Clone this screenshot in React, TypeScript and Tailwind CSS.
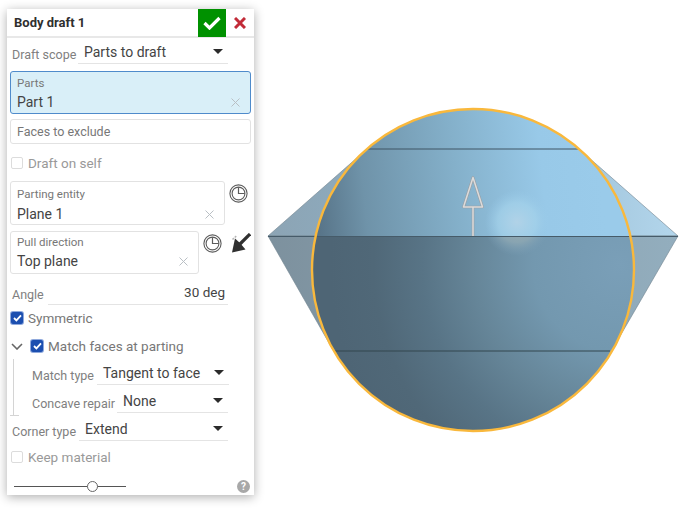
import { ReactNode } from 'react';

const Caret = () => (
  <svg width="10" height="5" viewBox="0 0 10 5" className="shrink-0">
    <path d="M0 0h10L5 5z" fill="#2b2b2b" />
  </svg>
);

const Clear = () => (
  <svg width="9" height="9" viewBox="0 0 9 9" className="shrink-0">
    <path d="M.5.5l8 8M8.5.5l-8 8" stroke="#b9bfc4" strokeWidth="1" />
  </svg>
);

const Clock = () => (
  <svg width="19" height="19" viewBox="0 0 19 19" className="shrink-0">
    <circle cx="9.5" cy="9.5" r="8.6" fill="none" stroke="#5c5c5c" strokeWidth="1.1" />
    <circle cx="9.5" cy="9.5" r="6.4" fill="none" stroke="#5c5c5c" strokeWidth="1.1" />
    <path d="M9.5 3.2v6.3h6.2" fill="none" stroke="#5c5c5c" strokeWidth="1.2" />
  </svg>
);

const Check = ({ on, label }: { on?: boolean; label: string }) => (
  <div className="flex h-[16px] items-center gap-[5px]">
    {on ? (
      <span className="flex h-[12px] w-[12px] shrink-0 items-center justify-center rounded-[2px] bg-[#1c4fb0] shadow-[0_0_0_1px_#8fa9dc]">
        <svg width="9" height="8" viewBox="0 0 9 8">
          <path d="M1 4l2.4 2.4L8 1.4" fill="none" stroke="#fff" strokeWidth="1.8" />
        </svg>
      </span>
    ) : (
      <span className="h-[12px] w-[12px] shrink-0 rounded-[2px] border border-[#dcdcdc] bg-white" />
    )}
    <span className={`whitespace-nowrap text-[13.5px] leading-[16px] ${on ? 'text-[#777]' : 'text-[#999]'}`}>{label}</span>
  </div>
);

const Select = ({ label, value, labelClass, fieldClass }: { label: string; value: string; labelClass: string; fieldClass: string }) => (
  <div className="flex h-[22px] shrink-0 items-end">
    <span className={`shrink-0 whitespace-nowrap pb-[1px] text-[12.5px] leading-[16px] text-[#808080] ${labelClass}`}>{label}</span>
    <div className={`flex h-[22px] items-center justify-between border-b border-[#e4e4e4] pb-[2px] pl-[6px] pr-[5px] ${fieldClass}`}>
      <span className="whitespace-nowrap text-[14px] leading-[18px] text-[#444]">{value}</span>
      <Caret />
    </div>
  </div>
);

const Field = ({ label, value, className, labelClass, rowClass, children }: { label: string; value: string; className: string; labelClass: string; rowClass: string; children?: ReactNode }) => (
  <div className={`flex shrink-0 flex-col rounded-[3px] border px-[6px] ${className}`}>
    <span className={`text-[11.5px] leading-[14px] text-[#777] ${labelClass}`}>{label}</span>
    <div className={`flex items-center justify-between pr-[4px] ${rowClass}`}>
      <span className="text-[14px] leading-[19px] text-[#444]">{value}</span>
      {children}
    </div>
  </div>
);

const Panel = () => (
  <div className="ml-[7px] mt-[9px] flex h-[486px] w-[247px] shrink-0 flex-col bg-white shadow-[0_2px_10px_rgba(0,0,0,0.32)]">
    <div className="flex h-[29px] shrink-0 items-center border-b-2 border-[#e8e8e8]">
      <span className="ml-[7px] flex-1 text-[13px] font-bold text-[#2f2f2f]">Body draft 1</span>
      <div className="flex h-[28px] w-[28px] items-center justify-center self-start bg-[#009100]">
        <svg width="18" height="14" viewBox="0 0 18 14">
          <path d="M1.5 7l5 5L16.5 2" fill="none" stroke="#fff" strokeWidth="3.2" />
        </svg>
      </div>
      <div className="flex w-[28px] items-center justify-center">
        <svg width="12" height="12" viewBox="0 0 12 12">
          <path d="M1 1l10 10M11 1L1 11" stroke="#c22b38" strokeWidth="3" />
        </svg>
      </div>
    </div>

    <div className="ml-[5px] mt-[4px]">
      <Select label="Draft scope" value="Parts to draft" labelClass="w-[66px]" fieldClass="w-[150px]" />
    </div>

    <Field label="Parts" value="Part 1" className="ml-[3px] mt-[7px] h-[43px] w-[241px] border-[#4f8bcb] bg-[#d9eff8]" labelClass="mt-[4px]" rowClass="mt-[3px]">
      <Clear />
    </Field>

    <div className="ml-[3px] mt-[5px] flex h-[25px] w-[241px] shrink-0 items-center rounded-[3px] border border-[#e2e2e2] px-[6px] pt-[2px] text-[12.5px] text-[#777]">
      Faces to exclude
    </div>

    <div className="ml-[4px] mt-[11px]">
      <Check label="Draft on self" />
    </div>

    <div className="ml-[3px] mt-[10px] flex w-[241px] shrink-0 items-start justify-between">
      <Field label="Parting entity" value="Plane 1" className="h-[44px] w-[215px] border-[#e2e2e2]" labelClass="mt-[5px]" rowClass="mt-[4px]">
        <Clear />
      </Field>
      <span className="mr-[3px] mt-[3px]">
        <Clock />
      </span>
    </div>

    <div className="ml-[3px] mt-[6px] flex w-[241px] shrink-0 items-start">
      <Field label="Pull direction" value="Top plane" className="h-[43px] w-[189px] border-[#e2e2e2]" labelClass="mt-[3px]" rowClass="mt-[3px]">
        <Clear />
      </Field>
      <span className="ml-[4px] mt-[3px]">
        <Clock />
      </span>
      <svg width="20" height="20" viewBox="0 0 20 20" className="ml-[9px] mt-[2px]">
        <path d="M1.5 6.5L6 2.5" stroke="#b5b5b5" strokeWidth="1.6" strokeDasharray="2 1" />
        <path d="M1 19.5L4 5.5L9 10L14.5 16.5z" fill="#303030" />
        <path d="M19 1L8.5 11.5" stroke="#303030" strokeWidth="3.2" />
      </svg>
    </div>

    <div className="ml-[5px] mt-[9px] flex h-[22px] shrink-0 items-end">
      <span className="w-[36px] pb-[1px] text-[12.5px] leading-[18px] text-[#808080]">Angle</span>
      <div className="flex h-[22px] w-[180px] items-center justify-end border-b border-[#e4e4e4] pb-[2px] pr-[3px] text-[13.5px] text-[#444]">
        30 deg
      </div>
    </div>

    <div className="ml-[4px] mt-[5px]">
      <Check on label="Symmetric" />
    </div>

    <div className="ml-[4px] mt-[12px] flex h-[16px] items-center gap-[8px]">
      <svg width="12" height="7" viewBox="0 0 12 7" className="shrink-0">
        <path d="M1 1l5 5 5-5" fill="none" stroke="#666" strokeWidth="1.6" />
      </svg>
      <Check on label="Match faces at parting" />
    </div>

    <div className="relative ml-[6px] mt-[5px] flex h-[57px] shrink-0 flex-col border-l border-[#d4d4d4] pl-[18px] pt-[4px]">
      <span className="absolute -left-[4px] bottom-0 h-px w-[9px] bg-[#d4d4d4]" />
      <Select label="Match type" value="Tangent to face" labelClass="w-[65px]" fieldClass="w-[132px]" />
      <div className="mt-[6px]">
        <Select label="Concave repair" value="None" labelClass="w-[85px]" fieldClass="w-[111px]" />
      </div>
    </div>

    <div className="ml-[5px] mt-[3px]">
      <Select label="Corner type" value="Extend" labelClass="w-[67px]" fieldClass="w-[149px]" />
    </div>

    <div className="ml-[4px] mt-[8px]">
      <Check label="Keep material" />
    </div>

    <div className="ml-[7px] mt-[15px] flex items-center justify-between pr-[4px]">
      <div className="relative h-[11px] w-[112px]">
        <div className="absolute left-0 right-0 top-[5px] h-px bg-[#555]" />
        <div className="absolute left-[73px] top-0 h-[11px] w-[11px] rounded-full border border-[#666] bg-white" />
      </div>
      <span className="flex h-[13px] w-[13px] items-center justify-center rounded-full bg-[#a8a8a8] text-[10px] font-bold leading-none text-white">
        ?
      </span>
    </div>
  </div>
);

// 3D view, viewBox is in page coordinates
const Viewport = () => (
  <svg width="430" height="340" viewBox="254 100 430 340" className="mt-[100px] shrink-0">
    <defs>
      <linearGradient id="coneTop" x1="0" y1="0" x2="1" y2="0">
        <stop offset="0" stopColor="#8ca4b4" />
        <stop offset="0.5" stopColor="#8fb3ca" />
        <stop offset="1" stopColor="#b3d6ec" />
      </linearGradient>
      <linearGradient id="coneBot" x1="0" y1="0" x2="1" y2="0">
        <stop offset="0" stopColor="#7d919e" />
        <stop offset="1" stopColor="#93aebe" />
      </linearGradient>
      <linearGradient id="upper" gradientUnits="userSpaceOnUse" x1="312" y1="200" x2="600" y2="170">
        <stop offset="0" stopColor="#567286" />
        <stop offset="0.18" stopColor="#6f93a9" />
        <stop offset="0.5" stopColor="#84b0ca" />
        <stop offset="0.8" stopColor="#98c9e8" />
        <stop offset="1" stopColor="#9acbea" />
      </linearGradient>
      <radialGradient id="lower" gradientUnits="userSpaceOnUse" cx="620" cy="265" r="290">
        <stop offset="0" stopColor="#7a9fb8" />
        <stop offset="0.3" stopColor="#7398af" />
        <stop offset="0.5" stopColor="#668699" />
        <stop offset="0.68" stopColor="#587486" />
        <stop offset="0.85" stopColor="#506878" />
        <stop offset="1" stopColor="#4e6575" />
      </radialGradient>
      <radialGradient id="spotTop" gradientUnits="userSpaceOnUse" cx="517" cy="222" r="32">
        <stop offset="0" stopColor="#b1d2e7" />
        <stop offset="0.6" stopColor="#a6d4ec" stopOpacity="0.65" />
        <stop offset="1" stopColor="#9acbea" stopOpacity="0" />
      </radialGradient>
      <radialGradient id="spotBot" gradientUnits="userSpaceOnUse" cx="517" cy="222" r="34">
        <stop offset="0" stopColor="#a3aeb0" />
        <stop offset="0.6" stopColor="#8fa9b4" stopOpacity="0.8" />
        <stop offset="1" stopColor="#7a9fb8" stopOpacity="0" />
      </radialGradient>
      <clipPath id="above">
        <rect x="254" y="100" width="430" height="136" />
      </clipPath>
      <clipPath id="below">
        <rect x="254" y="236" width="430" height="204" />
      </clipPath>
    </defs>

    <path d="M268 236L367 149H579L678 236z" fill="url(#coneTop)" stroke="#71838f" strokeWidth="0.6" />
    <path d="M268 236L333 350H612L678 236z" fill="url(#coneBot)" stroke="#71838f" strokeWidth="0.6" />

    <circle cx="473" cy="270" r="161" fill="url(#upper)" clipPath="url(#above)" />
    <circle cx="473" cy="270" r="161" fill="url(#lower)" clipPath="url(#below)" />
    <circle cx="517" cy="222" r="32" fill="url(#spotTop)" clipPath="url(#above)" />
    <circle cx="517" cy="222" r="34" fill="url(#spotBot)" clipPath="url(#below)" />

    <path d="M368 149H578" stroke="#3f5564" strokeWidth="1" />
    <path d="M268 236.5H678" stroke="#465b69" strokeWidth="1.2" />
    <path d="M335 351H610" stroke="#33464f" strokeWidth="1" />

    <circle cx="473" cy="270" r="161" fill="none" stroke="#f9b83c" strokeWidth="2.4" />

    <path d="M473 177.5L463.5 207H482.5zM473 207V236" fill="none" stroke="#9c9fa2" strokeWidth="2.6" strokeLinejoin="round" />
    <path d="M473 177.5L463.5 207H482.5zM473 207V236" fill="none" stroke="#dcdcdc" strokeWidth="1.5" strokeLinejoin="round" />
  </svg>
);

export default function App() {
  return (
    <div className="flex h-[511px] w-[684px] overflow-hidden bg-white font-['Roboto','Inter',sans-serif]">
      <Panel />
      <Viewport />
    </div>
  );
}
